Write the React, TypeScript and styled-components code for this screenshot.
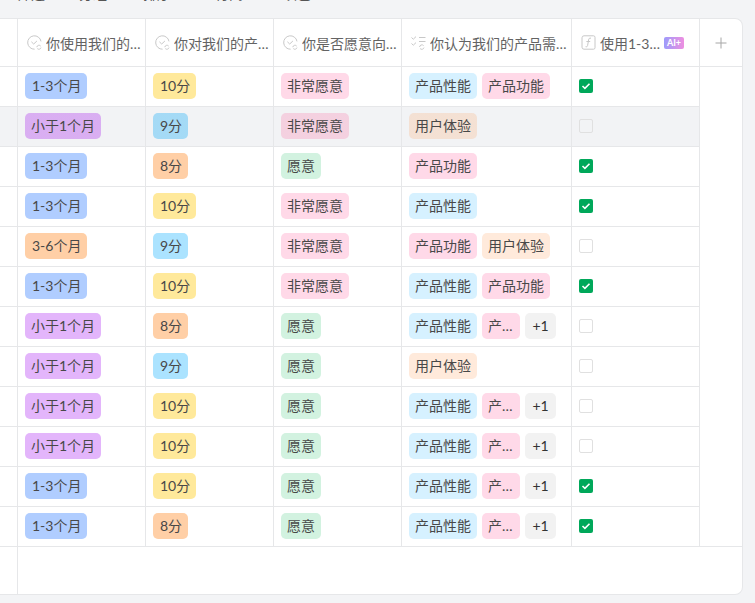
import React from 'react';
import styled, { createGlobalStyle, css } from 'styled-components';

const GlobalStyle = createGlobalStyle`
  html, body {
    margin: 0;
    height: 100%;
    overflow: hidden;
    background: #f3f4f6;
    font-family: Lato, "Noto Sans CJK SC", sans-serif;
  }
  * { box-sizing: border-box; }
`;

const LINE = '#e6e7e9';

const Page = styled.div`
  width: 755px;
  height: 603px;
  display: flex;
  flex-direction: column;
`;

const Toolbar = styled.div`
  height: 18px;
  flex: none;
  display: flex;
  align-items: flex-end;
  padding: 0 0 14px 17px;
  color: #555;
  font-size: 14px;
  line-height: 20px;
  overflow: hidden;
`;

const ToolItem = styled.div<{ $gap: number }>`
  display: flex;
  align-items: center;
  gap: 3px;
  margin-right: ${p => p.$gap}px;
  white-space: nowrap;
`;

const ToolIcon = styled.span`
  width: 10px;
  height: 12px;
  border-bottom: 2px solid #777;
`;

const Sheet = styled.div`
  width: 743px;
  height: 577px;
  flex: none;
  background: #fff;
  border: 1px solid ${LINE};
  border-left: none;
  border-radius: 0 8px 8px 0;
  display: flex;
  flex-direction: column;
  overflow: hidden;
`;

const Row = styled.div<{ $active?: boolean }>`
  display: flex;
  height: 40px;
  flex: none;
  ${p =>
    p.$active &&
    css`
      ${Cell} {
        background: #f2f3f5;
      }
      ${Tag} {
        background-image: linear-gradient(rgba(40, 50, 70, 0.05), rgba(40, 50, 70, 0.05));
      }
    `}
`;

const HeaderRow = styled.div`
  display: flex;
  height: 48px;
  flex: none;
  border-bottom: 1px solid ${LINE};
`;

const Cell = styled.div<{ $w: number }>`
  width: ${p => p.$w}px;
  flex: none;
  display: flex;
  align-items: center;
  gap: 5px;
  padding: 0 0 1px 7px;
  border-right: 1px solid ${LINE};
  border-bottom: 1px solid ${LINE};
  overflow: hidden;
`;

const HeadCell = styled.div<{ $w: number }>`
  width: ${p => p.$w}px;
  flex: none;
  display: flex;
  align-items: center;
  padding: 0 3px 0 9px;
  border-right: 1px solid ${LINE};
  color: #636363;
  font-size: 14px;
`;

const HeadIcon = styled.svg`
  width: 15px;
  height: 15px;
  flex: none;
  margin-right: 4px;
  fill: none;
  stroke: #c8c8c8;
  stroke-width: 1;
`;

const HeadText = styled.span`
  min-width: 0;
  flex: 1;
  white-space: nowrap;
  overflow: hidden;
  text-overflow: ellipsis;
`;

const AddCell = styled.div`
  flex: 1;
  display: flex;
  align-items: center;
  justify-content: center;
`;

const AiBadge = styled.span`
  flex: none;
  width: 20px;
  height: 12px;
  margin-left: 3px;
  margin-right: 12px;
  border-radius: 2px;
  background: linear-gradient(90deg, #9d9bfb, #ee8fe0);
  color: #fff;
  font-size: 9px;
  font-weight: 700;
  line-height: 12px;
  text-align: center;
`;

const TONES: Record<string, string> = {
  blue: '#b0cdff',
  yellow: '#ffe99b',
  pink: '#ffd9e8',
  purple: '#e3b5fb',
  sky: '#abe3ff',
  orange: '#ffcfa6',
  green: '#d2f2e0',
  ice: '#d6f1ff',
  peach: '#ffeadb',
  gray: '#f2f2f2',
};

const Tag = styled.span<{ $tone: string; $max?: number }>`
  flex: none;
  height: 26px;
  max-width: ${p => (p.$max ? `${p.$max}px` : 'none')};
  padding: 0 6px;
  border-radius: 5px;
  background-color: ${p => TONES[p.$tone]};
  color: #484848;
  font-size: 14px;
  line-height: 26px;
  white-space: nowrap;
  overflow: hidden;
  text-overflow: ellipsis;
`;

// digits sit a bit further in than the CJK labels
const NumberTag = styled(Tag)`
  padding-left: 7px;
`;

const CountTag = styled(Tag)`
  padding: 0 7.5px;
  color: #333;
`;

const Check = styled.span<{ $on: boolean }>`
  width: 14px;
  height: 14px;
  border-radius: 2px;
  display: flex;
  align-items: center;
  justify-content: center;
  background: ${p => (p.$on ? '#00a85a' : 'transparent')};
  border: ${p => (p.$on ? 'none' : '1px solid #e0e0e0')};
`;

const Footer = styled.div`
  flex: 1;
  display: flex;
`;

const FooterGutter = styled.div`
  width: 18px;
  border-right: 1px solid ${LINE};
`;

const Rule = styled.div`
  height: 1px;
  flex: none;
  margin-top: -1px;
  background: ${LINE};
`;

const COLS = { gutter: 18, a: 128, b: 128, c: 128, d: 170, e: 128 };

const SelectIcon = () => (
  <HeadIcon viewBox="0 0 15 15">
    <path d="M14 6.4A6.7 6.7 0 1 0 7.6 14.2" />
    <path d="M4.4 6.8l2.3 2.2 3.2-3" />
    <path d="M9.8 12.2a2.2 2.2 0 0 1 3.9-1.1M14 12.6a2.2 2.2 0 0 1-3.7 1" />
  </HeadIcon>
);

const MultiIcon = () => (
  <HeadIcon viewBox="0 0 15 15">
    <path d="M0.5 2.5l1.8 1.7L5 1.6M0.5 8.5l1.8 1.7L5 7.6" />
    <path d="M8 2.5h6.5M8 6.5h6.5" />
    <path d="M8.6 12a2.3 2.3 0 0 1 4-1.4M13 12.6a2.3 2.3 0 0 1-3.9 1" />
  </HeadIcon>
);

const FormulaIcon = () => (
  <HeadIcon viewBox="0 0 15 15">
    <path d="M12.5 0.8H3a2 2 0 0 0-2 2v9.4a2 2 0 0 0 2 2h9.5a1.5 1.5 0 0 0 1.5-1.5V2.3a1.5 1.5 0 0 0-1.5-1.5z" />
    <path d="M10 3.2c-1.7-.4-2.2.4-2.4 1.7l-1 5.6c-.2 1.1-.8 1.5-2 1.2M5.4 6.5h3.8" />
  </HeadIcon>
);

const PERF = '产品性能';
const FUNC = '产品功能';
const UX = '用户体验';

const NEEDS: Record<string, string> = { [PERF]: 'ice', [FUNC]: 'pink', [UX]: 'peach' };

type Item = {
  usage: [string, string];
  score: [string, string];
  will: [string, string];
  needs: string[];
  extra?: boolean;
  checked: boolean;
};

const M13: [string, string] = ['1-3个月', 'blue'];
const M1: [string, string] = ['小于1个月', 'purple'];
const M36: [string, string] = ['3-6个月', 'orange'];
const S10: [string, string] = ['10分', 'yellow'];
const S9: [string, string] = ['9分', 'sky'];
const S8: [string, string] = ['8分', 'orange'];
const VERY: [string, string] = ['非常愿意', 'pink'];
const YES: [string, string] = ['愿意', 'green'];

const ROWS: Item[] = [
  { usage: M13, score: S10, will: VERY, needs: [PERF, FUNC], checked: true },
  { usage: M1, score: S9, will: VERY, needs: [UX], checked: false },
  { usage: M13, score: S8, will: YES, needs: [FUNC], checked: true },
  { usage: M13, score: S10, will: VERY, needs: [PERF], checked: true },
  { usage: M36, score: S9, will: VERY, needs: [FUNC, UX], checked: false },
  { usage: M13, score: S10, will: VERY, needs: [PERF, FUNC], checked: true },
  { usage: M1, score: S8, will: YES, needs: [PERF, FUNC], extra: true, checked: false },
  { usage: M1, score: S9, will: YES, needs: [UX], checked: false },
  { usage: M1, score: S10, will: YES, needs: [PERF, FUNC], extra: true, checked: false },
  { usage: M1, score: S10, will: YES, needs: [PERF, FUNC], extra: true, checked: false },
  { usage: M13, score: S10, will: YES, needs: [PERF, FUNC], extra: true, checked: true },
  { usage: M13, score: S8, will: YES, needs: [PERF, FUNC], extra: true, checked: true },
];

const App: React.FC = () => (
  <Page>
    <GlobalStyle />
    <Toolbar>
      <ToolItem $gap={21}><span>筛选</span></ToolItem>
      <ToolItem $gap={23}><ToolIcon />分组</ToolItem>
      <ToolItem $gap={31}><ToolIcon />排序</ToolItem>
      <ToolItem $gap={27}><ToolIcon />行高</ToolItem>
      <ToolItem $gap={0}><ToolIcon />填色</ToolItem>
    </Toolbar>
    <Sheet>
      <HeaderRow>
        <HeadCell $w={COLS.gutter} />
        <HeadCell $w={COLS.a}><SelectIcon /><HeadText>你使用我们的产品多长时间了</HeadText></HeadCell>
        <HeadCell $w={COLS.b}><SelectIcon /><HeadText>你对我们的产品满意度打分</HeadText></HeadCell>
        <HeadCell $w={COLS.c}><SelectIcon /><HeadText>你是否愿意向朋友推荐</HeadText></HeadCell>
        <HeadCell $w={COLS.d}><MultiIcon /><HeadText>你认为我们的产品需要改进的地方</HeadText></HeadCell>
        <HeadCell $w={COLS.e}>
          <FormulaIcon />
          <HeadText>使用1-3个月的用户</HeadText>
          <AiBadge>AI+</AiBadge>
        </HeadCell>
        <AddCell>
          <svg width="12" height="12" viewBox="0 0 12 12" stroke="#a6a6a6" strokeWidth="1">
            <path d="M6 0.5v11M0.5 6h11" />
          </svg>
        </AddCell>
      </HeaderRow>
      {ROWS.map((row, i) => {
        const Usage = /^\d/.test(row.usage[0]) ? NumberTag : Tag;
        return (
          <Row key={i} $active={i === 1}>
            <Cell $w={COLS.gutter} />
            <Cell $w={COLS.a}><Usage $tone={row.usage[1]}>{row.usage[0]}</Usage></Cell>
            <Cell $w={COLS.b}><NumberTag $tone={row.score[1]}>{row.score[0]}</NumberTag></Cell>
            <Cell $w={COLS.c}><Tag $tone={row.will[1]}>{row.will[0]}</Tag></Cell>
            <Cell $w={COLS.d}>
              {row.needs.map((n, j) => (
                <Tag key={n} $tone={NEEDS[n]} $max={row.extra && j === 1 ? 38 : undefined}>{n}</Tag>
              ))}
              {row.extra && <CountTag $tone="gray">+1</CountTag>}
            </Cell>
            <Cell $w={COLS.e}>
              <Check $on={row.checked}>
                {row.checked && (
                  <svg width="10" height="8" viewBox="0 0 10 8" fill="none" stroke="#fff" strokeWidth="1.6">
                    <path d="M1.5 4l2.4 2.3 4.6-4.6" />
                  </svg>
                )}
              </Check>
            </Cell>
          </Row>
        );
      })}
      <Rule />
      <Footer>
        <FooterGutter />
      </Footer>
    </Sheet>
  </Page>
);

export default App;
